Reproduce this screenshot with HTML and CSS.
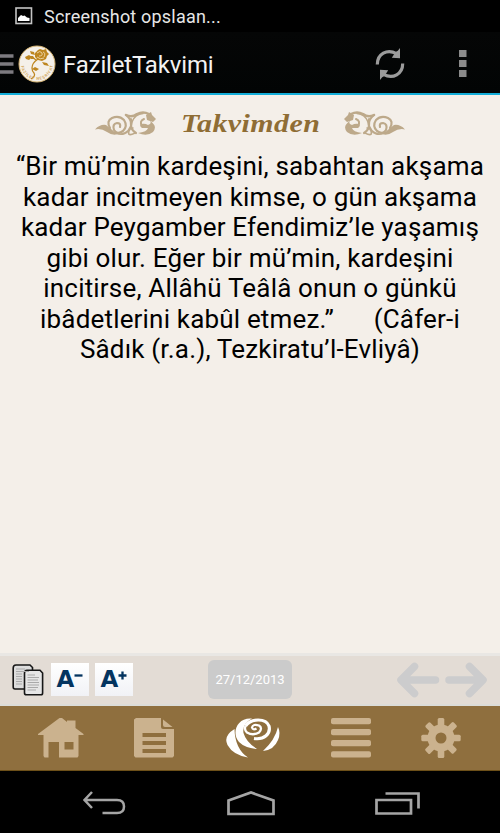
FILE: index.html
```
<!DOCTYPE html>
<html lang="tr">
<head>
  <meta charset="UTF-8">
  <meta name="viewport" content="width=device-width, initial-scale=1.0">
  <title>FaziletTakvimi</title>
  <link rel="stylesheet" href="styles.css">
</head>
<body>
  <!-- Status bar -->
  <div class="status-bar">
    <svg width="18" height="18" viewBox="0 0 18 18">
      <rect x="1" y="1" width="15.5" height="15.5" fill="none" stroke="#c4c4c4" stroke-width="1.6"/>
      <path d="M3 14V11L6 8L8 9L9.500 8.500L12 10.500L14.500 11V14Z" fill="#fff"/>
    </svg>
    <span>Screenshot opslaan...</span>
  </div>

  <!-- Action bar -->
  <header class="action-bar">
    <svg class="drawer" width="14" height="20" viewBox="0 0 14 20">
      <path d="M0 2H13.500M0 10H13.500M0 18H13.500" stroke="#7d7b80" stroke-width="3.600"/>
    </svg>
    <svg class="logo" width="38" height="38" viewBox="0 0 38 38">
      <defs><path id="ring" d="M3 19A16 16 0 0 0 35 19"/></defs>
      <circle cx="19" cy="19" r="18" fill="#f5f0e9" stroke="#d9b673" stroke-width="1"/>
      <g fill="#be8620">
        <path d="M17 8L20 5L22 4L25 5L28 4L29 7L31 9L29 11L28 14L24 16L20 15L17 12Z"/>
        <path d="M12 6L16 7L17 10L13 9ZM7 12L11 10L14 12L11 15L8 14ZM11 11L15 11L17 14L13 14ZM24 17L29 18L31 21L26 20Z"/>
        <path d="M14 24L17 22L21 24L18 26Z"/>
      </g>
      <path d="M20 14Q14 18 14 23Q14 26 16 28Q18 31 13 34M14 12L18 15" fill="none" stroke="#be8620" stroke-width="1.300"/>
      <path d="M19 8Q22 5 24 8Q25 11 21 11M25 7Q28 8 26 12M19 12Q22 15 26 13" fill="none" stroke="#f5e3bf" stroke-width=".8"/>
      <text class="logo-text"><textPath href="#ring" startOffset="2">FAZİLET  NEŞRİYAT</textPath></text>
    </svg>
    <h1>FaziletTakvimi</h1>
    <svg class="refresh" width="30" height="34" viewBox="0 0 30 34">
      <g id="arc">
        <path d="M2.300 17.500C2.300 7 12 1.500 21.500 6.600" fill="none" stroke="#9b9b9b" stroke-width="3.200"/>
        <path d="M16.800 10.800L25 11.200V1L22.800 3.700L20.600 5Z" fill="#9b9b9b"/>
      </g>
      <use href="#arc" transform="rotate(180 15 17)"/>
    </svg>
    <svg class="overflow" width="8" height="28" viewBox="0 0 8 28">
      <path d="M0 0H7.500V7H0ZM0 10H7.500V17H0ZM0 20H7.500V27H0Z" fill="#8b8b8b"/>
    </svg>
  </header>

  <!-- Page content -->
  <main>
    <div class="heading">
      <svg width="62" height="26" viewBox="0 0 62 26">
        <g id="ornament" fill="none" stroke="#bda98a" stroke-linecap="round">
          <path d="M0 18.500Q5 13 11 14Q15 17 19 20.500Q22 22.500 25 22Q19 26 12 21Q6 17 0 18.500Z" fill="#bda98a" stroke="none"/>
          <path d="M15 17Q11 10 17 7Q24 4 29 9Q33 15 28 20Q22 24 19 19Q17 13 22 12Q26 12 25 16" stroke-width="2.200"/>
          <path d="M21 22Q28 25 33 20Q38 14 36 8" stroke-width="1.900"/>
          <path d="M31 4Q37 7 42 3Q48 0 54 3" stroke-width="2.500"/>
          <path d="M31 4Q37 9 36 14Q36 19 41 22" stroke-width="2.200"/>
          <path d="M37 11Q40 3 48 2.500" stroke-width="1.500"/>
          <path d="M40 22Q32 26 34 20Q35 17 38 17" stroke-width="1.600"/>
          <path d="M47 15Q44 10 49 8" stroke-width="2"/>
          <path d="M51 4L56 1L57 4L61 8L58 11L52 9ZM55 10Q63 15 58 21Q52 26 43 22Q52 21 53 17L47 17Q44 15 46 13Q50 12 53 14Q57 13 55 10Z" fill="#bda98a" stroke="none"/>
        </g>
      </svg>
      <h2>Takvimden</h2>
      <svg width="62" height="26" viewBox="0 0 62 26">
        <use href="#ornament" transform="translate(62 0) scale(-1 1)"/>
      </svg>
    </div>
    <p class="quote">
      <span>“Bir mü’min kardeşini, sabahtan akşama</span>
      <span>kadar incitmeyen kimse, o gün akşama</span>
      <span>kadar Peygamber Efendimiz’le yaşamış</span>
      <span>gibi olur. Eğer bir mü’min, kardeşini</span>
      <span>incitirse, Allâhü Teâlâ onun o günkü</span>
      <span>ibâdetlerini kabûl etmez.”&nbsp;&nbsp;&nbsp;&nbsp;&nbsp; (Câfer-i</span>
      <span>Sâdık (r.a.), Tezkiratu’l-Evliyâ)</span>
    </p>
  </main>

  <!-- Tools -->
  <div class="toolbar">
    <svg class="copy" width="32" height="32" viewBox="0 0 32 32">
      <g stroke="#171717" stroke-width="1.600">
        <path d="M1.200 4Q1.200 1 4 1H18L20.500 3.500V24Q20.500 25 19 25H3Q1.200 25 1.200 23Z" fill="#ddd"/>
        <path d="M12.500 9Q12.500 6.200 15 6.200H28L30.600 9V29Q30.600 30.800 29 30.800H14.500Q12.500 30.800 12.500 29Z" fill="#e6e6e6"/>
      </g>
      <path d="M4 5H13M4 7.500H17M4 10H10M4 12.500H10M4 15H10M4 17.500H10M4 20H10M15.500 11H23M15.500 13.500H27M15.500 16H26M15.500 18.500H27M15.500 21H27M15.500 23.500H26M15.500 26H24" stroke="#aaa" stroke-width="1"/>
    </svg>
    <button class="size-btn">A<svg width="9" height="9" viewBox="0 0 9 9"><path d="M.5 4.500H8.500" stroke="#04345f" stroke-width="2.300"/></svg></button>
    <button class="size-btn">A<svg width="9" height="9" viewBox="0 0 9 9"><path d="M.5 4.500H8.500M4.500 .5V8.500" stroke="#04345f" stroke-width="2.300"/></svg></button>
    <button class="date">27/12/2013</button>
    <svg class="arrows" width="90" height="36" viewBox="0 0 90 36">
      <path d="M17.500 4.500L4 18L17.500 31.500M5 18H38.500M72.500 4.500L86 18L72.500 31.500M85 18H52" fill="none" stroke="#cccccd" stroke-width="7.500" stroke-linecap="round" stroke-linejoin="round"/>
    </svg>
  </div>

  <!-- Tab navigation -->
  <nav class="tabs">
    <svg width="46" height="42" viewBox="0 0 46 42">
      <path fill="#cbb28e" fill-rule="evenodd" d="M0 17L21.500 1H24L29 5V3.500H37.500V11L45.500 17V18H40.500V39L39.500 40.500H21V25H10.500V40.500H6.500L5.500 39V18H0ZM26.500 25V32.500H35.500V25Z"/>
    </svg>
    <svg width="40" height="42" viewBox="0 0 40 42">
      <path fill="#cbb28e" fill-rule="evenodd" d="M2 1H27V10Q27 12 29 12H40V39L38.500 40.500H1.500L0 39V2.500ZM8.500 16V20H32V16ZM8.500 24V28H32V24ZM8.500 32V36H32V32Z"/>
      <path d="M29 2.500L38.500 10H31Q29 10 29 8Z" fill="#cbb28e"/>
    </svg>
    <svg width="56" height="42" viewBox="0 0 56 42">
      <g fill="#fff">
        <path d="M9.500 12Q-2 19 2.500 28Q8 38 23 40.500Q10 32 9.500 12Z"/>
        <path d="M27 1.500C12 0 6 16 14 25Q20 31 32 32Q21 25 18.500 16Q17 7 27 1.500Z"/>
        <path d="M53 10Q50 23 38 34Q49 33 53 23Q56 16 53 10Z"/>
      </g>
      <path d="M20.500 9C26 1 41 1 44 9C46 17 39 23 29 21.500" fill="none" stroke="#fff" stroke-width="3.200"/>
      <path d="M20.500 9Q19 13 22 15.500Q28 19 34 15.500Q38 11 34 8.500Q28 6.500 27 10.500Q28 13.500 31.500 11.500" fill="none" stroke="#fff" stroke-width="2.300"/>
    </svg>
    <svg width="40" height="42" viewBox="0 0 40 42">
      <g fill="#cbb28e">
        <rect y="1" width="40" height="6.300" rx="2"/>
        <rect y="12" width="40" height="6.300" rx="2"/>
        <rect y="23" width="40" height="6.300" rx="2"/>
        <rect y="34.300" width="40" height="6.300" rx="2"/>
      </g>
    </svg>
    <svg width="40" height="42" viewBox="-20 -21 40 42">
      <circle r="9.500" fill="none" stroke="#cbb28e" stroke-width="8"/>
      <g id="teeth" fill="#cbb28e">
        <rect x="-3.300" y="-20" width="6.600" height="9" rx="1.500"/>
        <rect x="-3.300" y="11" width="6.600" height="9" rx="1.500"/>
        <rect x="-19.700" y="-3.300" width="9" height="6.600" rx="1.500"/>
        <rect x="10.700" y="-3.300" width="9" height="6.600" rx="1.500"/>
      </g>
      <use href="#teeth" transform="rotate(45)"/>
    </svg>
  </nav>

  <!-- System buttons -->
  <footer class="system-bar">
    <svg width="44" height="26" viewBox="0 0 44 26">
      <path d="M10 1L2.500 9L10 17M2.500 9H35Q42 9 42 15.500Q42 22 35 22H20.500" fill="none" stroke="#a5a5a5" stroke-width="2.500"/>
    </svg>
    <svg width="48" height="26" viewBox="0 0 48 26">
      <path d="M1.500 9.500L24 1.500L46.500 9.500V23H1.500Z" fill="none" stroke="#a5a5a5" stroke-width="2.700"/>
    </svg>
    <svg width="46" height="26" viewBox="0 0 46 26">
      <path d="M1.500 9H36V22.500H1.500ZM10.500 2.500H43.500V17.500" fill="none" stroke="#a5a5a5" stroke-width="2.700"/>
    </svg>
  </footer>
</body>
</html>
```

FILE: styles.css
```
* {
  margin: 0;
  padding: 0;
  box-sizing: border-box;
}

body {
  display: flex;
  flex-direction: column;
  width: 500px;
  height: 833px;
  overflow: hidden;
  background-color: #f4efe9;
  color: #000;
  font-family: Roboto, sans-serif;
}

svg {
  display: block;
  flex: none;
}

/* Status bar */
.status-bar {
  display: flex;
  align-items: center;
  gap: 11px;
  height: 32px;
  padding-left: 15px;
  background-color: #000;
  color: #e6e6e6;
  font-size: 18px;
  letter-spacing: 0.2px;
}

/* Action bar */
.action-bar {
  display: flex;
  align-items: center;
  height: 63px;
  padding-top: 2px;
  background: linear-gradient(#050606, #020404);
  border-bottom: 2px solid #13add8;
  color: #f3f3f3;
}

.logo {
  margin-left: 4px;
}

.logo-text {
  fill: #d3a75b;
  font-size: 4px;
  font-weight: bold;
  letter-spacing: 0.8px;
}

.action-bar h1 {
  margin: 2px 0 0 7px;
  font-size: 24px;
  font-weight: 400;
  letter-spacing: -0.15px;
}

.refresh {
  margin-left: auto;
}

.overflow {
  margin: 0 33px 0 54px;
}

/* Content */
main {
  flex: 1;
}

.heading {
  display: flex;
  justify-content: center;
  align-items: center;
  gap: 24px;
  height: 56px;
  padding-top: 2px;
}

.heading h2 {
  width: 138px;
  color: #8f6d35;
  font-family: "Liberation Serif", serif;
  font-size: 26px;
  font-style: italic;
  letter-spacing: 0.4px;
  white-space: nowrap;
  transform: scaleX(1.15);
  transform-origin: left;
}

.quote {
  font-size: 26px;
  letter-spacing: 0.18px;
  line-height: 30.5px;
  text-align: center;
}

.quote span {
  display: block;
  white-space: nowrap;
}

/* Toolbar */
.toolbar {
  display: flex;
  align-items: center;
  height: 53px;
  padding: 0 12px 1px;
  background-color: #e3dcd5;
  border-top: 3px solid #e9e7e4;
  border-bottom: 2px solid #dcdcd8;
}

.size-btn {
  display: flex;
  justify-content: center;
  width: 38px;
  height: 33px;
  margin-left: 6px;
  border: none;
  background: linear-gradient(#fff, #f1f2f6);
  color: #04345f;
  font: bold 23px/33px "DejaVu Sans", sans-serif;
}

.size-btn svg {
  margin-top: 8px;
}

.copy + .size-btn {
  margin-left: 7px;
}

.date {
  width: 84px;
  height: 39px;
  margin-left: 75px;
  border: none;
  border-radius: 6px;
  background-color: #cbcbcb;
  color: #fff;
  font: 13px Roboto, sans-serif;
}

.arrows {
  margin: 0 1px 0 auto;
}

/* Tabs */
.tabs {
  display: flex;
  justify-content: space-between;
  align-items: center;
  height: 65px;
  padding: 0 39px 0 38px;
  background-color: #8f6f3e;
  border-bottom: 1px solid #6d5019;
}

/* System buttons */
.system-bar {
  display: flex;
  justify-content: space-between;
  align-items: center;
  height: 62px;
  padding: 4px 79px 0 82px;
  background-color: #000;
}
```
